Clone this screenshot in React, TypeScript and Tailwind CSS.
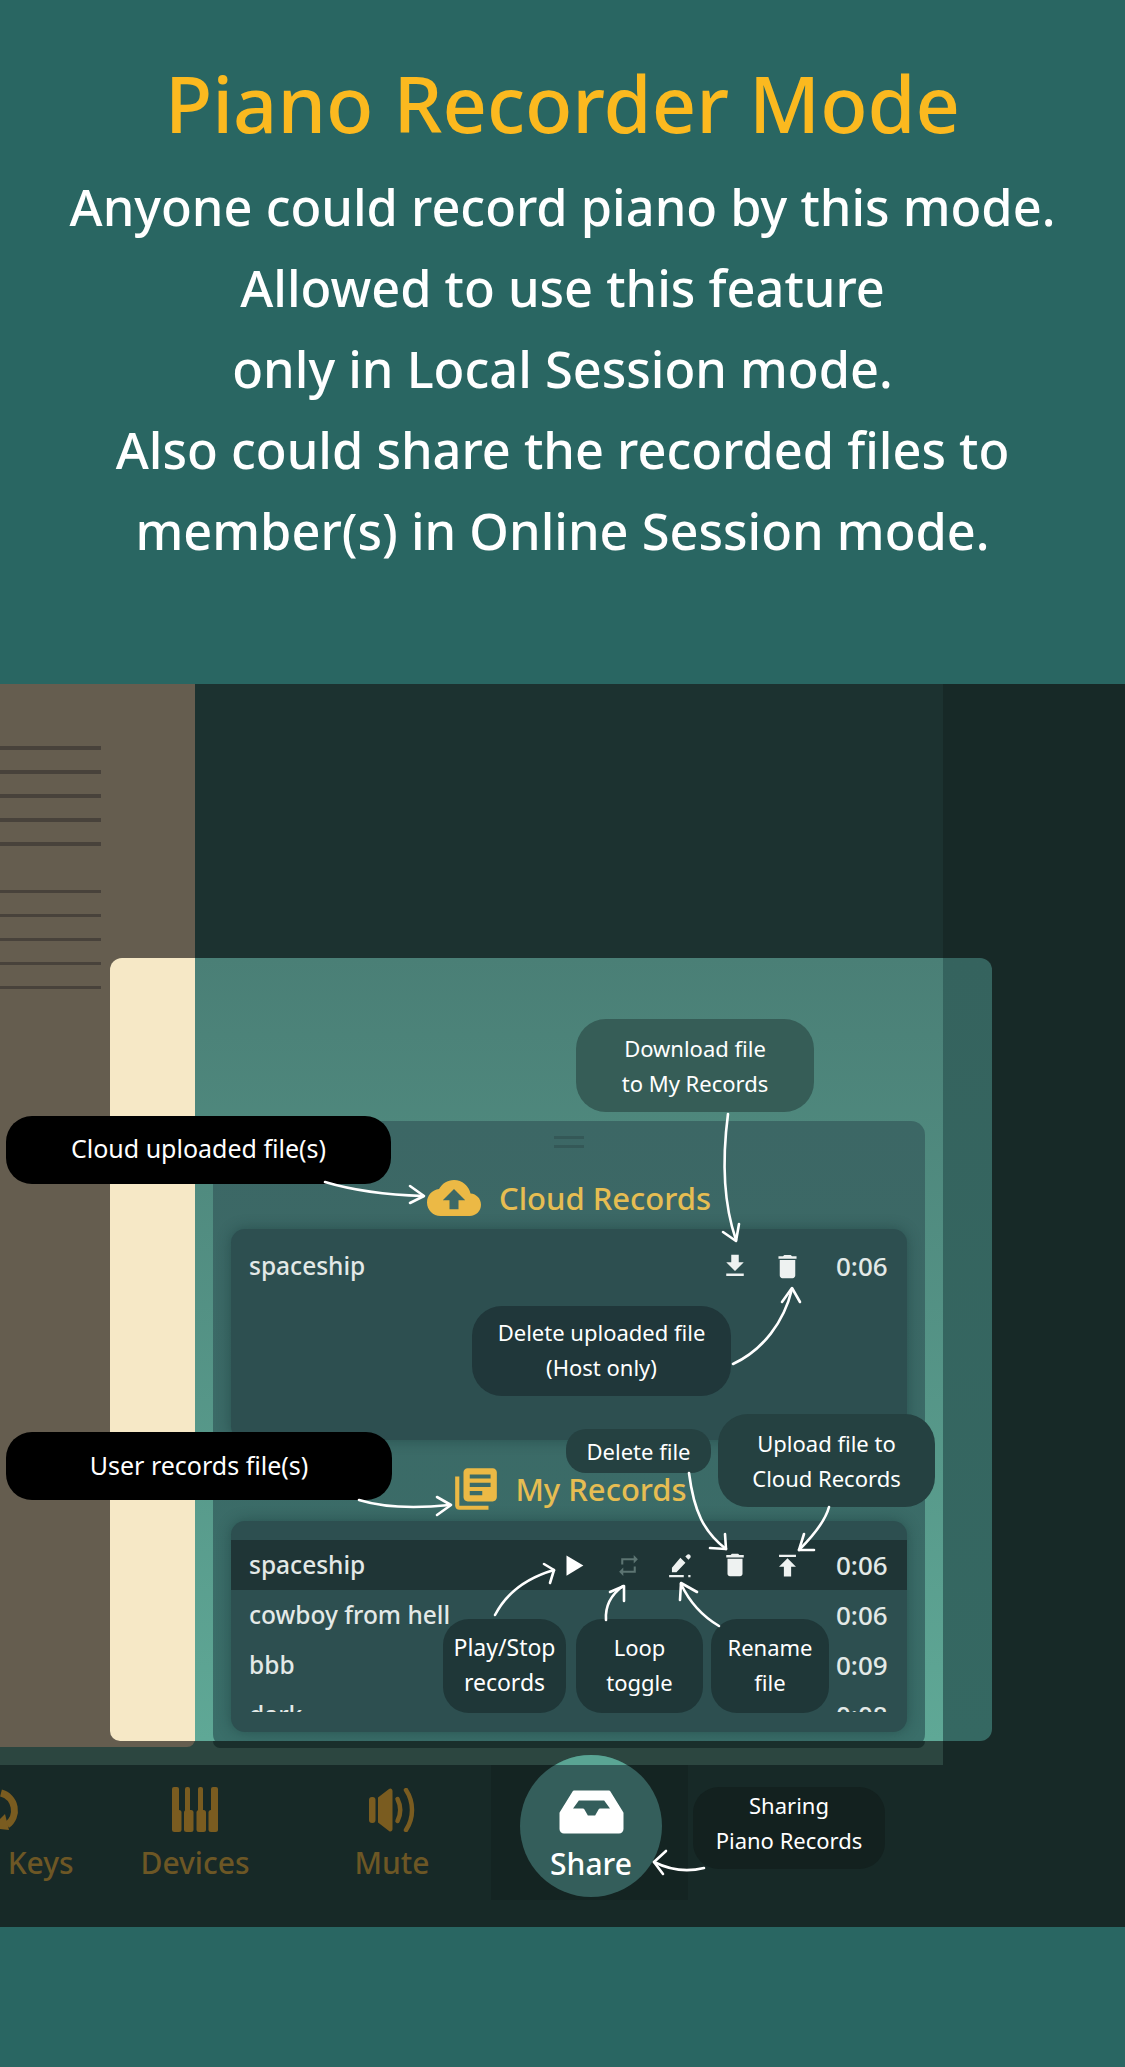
import React from "react";

const font = "font-['Noto_Sans',sans-serif]";

function Mi({ d, className }: { d: string; className: string }) {
  return (
    <svg viewBox="0 0 24 24" className={className} fill="currentColor">
      <path d={d} />
    </svg>
  );
}

const ICONS = {
  download: "M19 9h-4V3H9v6H5l7 7 7-7zM5 18v2h14v-2H5z",
  trash: "M6 19c0 1.1.9 2 2 2h8c1.1 0 2-.9 2-2V7H6v12zM19 4h-3.5l-1-1h-5l-1 1H5v2h14V4z",
  play: "M4 3v18l15-9z",
  loop: "M7 7h10v3l4-4-4-4v3H5v6h2V7zm10 10H7v-3l-4 4 4 4v-3h12v-6h-2v4z",
  pencil: "M15.5 9.5L11 5 3.5 14v4h4zM19.6 5.4c.8-.8.8-2 0-2.8-.8-.8-2-.8-2.8 0l-1.4 1.4 2.8 2.8zM1 20.5h13v2H1zM18 20.5h2v2h-2z",
  upload: "M5 3v2h14V3H5zm0 10h4v8h6v-8h4l-7-7-7 7z",
  cloud: "M19.35 10.04C18.67 6.59 15.64 4 12 4 9.11 4 6.6 5.64 5.35 8.04 2.34 8.36 0 10.91 0 14c0 3.31 2.69 6 6 6h13c2.76 0 5-2.24 5-5 0-2.64-2.05-4.78-4.65-4.96zM14 13v4h-4v-4H7l5-5 5 5h-3z",
  books: "M4 6H2v14c0 1.1.9 2 2 2h14v-2H4V6zm16-4H8c-1.1 0-2 .9-2 2v12c0 1.1.9 2 2 2h12c1.1 0 2-.9 2-2V4c0-1.1-.9-2-2-2zm-1 9H9V9h10v2zm-4 4H9v-2h6v2zm4-8H9V5h10v2z",
};

function Callout({ className, lines }: { className: string; lines: string[] }) {
  return (
    <div className={`absolute flex flex-col items-center justify-center text-center text-white leading-[35px] whitespace-nowrap ${className}`}>
      {lines.map((l) => (
        <div key={l}>{l}</div>
      ))}
    </div>
  );
}

const ARROWS = [
  ["M325 1182C355 1191 390 1195 423 1196", "M410 1186L424 1196L410 1203"],
  ["M359 1500C388 1509 420 1508 450 1505", "M437 1497L451 1505L437 1515"],
  ["M728 1114C722 1160 724 1205 736 1240", "M723 1232L736 1241L739 1224"],
  ["M733 1364C763 1350 784 1322 792 1289", "M782 1302L792 1288L800 1302"],
  ["M689 1473C694 1512 704 1532 726 1549", "M710 1548L726 1549L725 1534"],
  ["M829 1507C825 1522 812 1537 799 1550", "M804 1534L799 1550L814 1550"],
  ["M495 1615C508 1590 530 1577 554 1570", "M544 1564L554 1570L550 1583"],
  ["M606 1620C605 1606 612 1594 623 1586", "M610 1592L624 1586L624 1601"],
  ["M719 1626C702 1616 690 1603 681 1584", "M680 1600L681 1583L697 1592"],
  ["M704 1868C688 1872 670 1870 654 1862", "M666 1851L654 1862L663 1874"],
];

function Row({ name, time, selected, icons }: { name: string; time: string; selected?: boolean; icons?: React.ReactNode }) {
  return (
    <div className={`flex h-[50px] shrink-0 items-center pl-[18px] pr-[19px] text-[24.5px] font-medium text-[#e3e9e7] ${selected ? "bg-[#1f3536]" : ""}`}>
      <span>{name}</span>
      <div className="ml-auto flex items-center">{icons}</div>
      <span className="ml-[22px] w-[52px] text-[26px]">{time}</span>
    </div>
  );
}

function IconBox({ d, className }: { d: string; className: string }) {
  return (
    <div className="flex w-[53px] justify-center">
      <Mi d={d} className={className} />
    </div>
  );
}

export default function App() {
  return (
    <div className={`flex h-[2067px] w-[1125px] flex-col overflow-hidden bg-[#296662] ${font}`}>
      <header className="flex h-[684px] shrink-0 flex-col items-center pt-[59px] text-center">
        <h1 className="h-[88px] whitespace-nowrap text-[77.5px] font-medium leading-[88px] text-[#fbb91f]">Piano Recorder Mode</h1>
        <div className="mt-[19px] whitespace-nowrap text-[50.5px] font-medium leading-[81px] text-white">
          <p>Anyone could record piano by this mode.</p>
          <p>Allowed to use this feature</p>
          <p>only in Local Session mode.</p>
          <p>Also could share the recorded files to</p>
          <p>member(s) in Online Session mode.</p>
        </div>
      </header>

      <section className="relative h-[1243px] shrink-0 overflow-hidden bg-[#172927]">
        {/* backdrop */}
        <div className="flex h-[1081px] w-[943px] items-start bg-[#2c4640]">
          <div className="flex h-[1063px] w-[195px] flex-col rounded-br-[8px] bg-[#655d4f]">
            <div className="mt-[62px] flex w-[101px] flex-col gap-[20.5px]">
              {[0, 1, 2, 3, 4].map((i) => (
                <div key={i} className="h-[3.5px] bg-[#48423b]" />
              ))}
            </div>
            <div className="mt-[44px] flex w-[101px] flex-col gap-[20.5px]">
              {[0, 1, 2, 3, 4].map((i) => (
                <div key={i} className="h-[3.5px] bg-[#48423b]" />
              ))}
            </div>
          </div>
          <div className="h-[1057px] w-[748px] bg-[#1c3230]" />
        </div>

        {/* bottom bar */}
        <nav className="relative h-[162px] bg-[#172927] text-[30px] font-medium text-[#6d5725]">
          <div className="absolute left-[-78px] top-[23px] flex w-[150px] flex-col items-center">
            <svg viewBox="0 0 44 44" className="h-[44px] w-[44px]" fill="none" stroke="#7a5c20" strokeWidth="7">
              <path d="M26 5A18 18 0 0 1 32 37" />
              <path d="M16 40L34 42L30 26z" fill="#7a5c20" stroke="none" />
            </svg>
            <span className="mt-[13px] whitespace-nowrap leading-[36px]">Reset Keys</span>
          </div>
          <div className="absolute left-[135px] top-[22px] flex w-[120px] flex-col items-center">
            <svg viewBox="0 0 46 45" className="h-[45px] w-[46px]" fill="#7a5c20">
              <rect x="0" y="0" width="7" height="28" rx="2" />
              <rect x="13" y="0" width="5" height="28" rx="2" />
              <rect x="26" y="0" width="5" height="28" rx="2" />
              <rect x="39" y="0" width="7" height="28" rx="2" />
              <rect x="0" y="23" width="9.5" height="22" rx="2.5" />
              <rect x="12" y="23" width="9.5" height="22" rx="2.5" />
              <rect x="24.5" y="23" width="9.5" height="22" rx="2.5" />
              <rect x="36.5" y="23" width="9.5" height="22" rx="2.5" />
            </svg>
            <span className="mt-[13px] leading-[36px]">Devices</span>
          </div>
          <div className="absolute left-[332px] top-[23px] flex w-[120px] flex-col items-center">
            <svg viewBox="0 0 46 44" className="h-[44px] w-[46px]" fill="#7a5c20">
              <rect x="0" y="9" width="6.5" height="26" rx="3" />
              <path d="M9 9.5L20 1c1.5-1.2 3.5-.2 3.5 2V41c0 2.2-2 3.2-3.5 2L9 34.5z" />
              <path d="M28.5 11c3.5 7 3.5 15 0 22" fill="none" stroke="#7a5c20" strokeWidth="4.5" strokeLinecap="round" />
              <path d="M37 2c8 12 8 28 0 40" fill="none" stroke="#7a5c20" strokeWidth="4.5" strokeLinecap="round" />
            </svg>
            <span className="mt-[13px] leading-[36px]">Mute</span>
          </div>
          <div className="absolute left-[491px] top-0 h-[135px] w-[197px] bg-[#142422]" />
        </nav>

        {/* modal */}
        <div className="absolute left-[110px] top-[274px] flex h-[783px] w-[882px] overflow-hidden rounded-[12px] rounded-bl-[10px]">
          <div className="w-[85px] bg-[#f6e8c6]" />
          <div className="w-[748px] bg-gradient-to-b from-[#4a7f76] to-[#5fa896]" />
          <div className="w-[49px] bg-gradient-to-b from-[#35635e] to-[#356862]" />
        </div>

        {/* records panel */}
        <div className="absolute left-[213px] top-[437px] flex h-[627px] w-[712px] flex-col rounded-[14px] bg-gradient-to-b from-[#3c6765] to-[#3a6e69] px-[18px] pt-[15px]">
          <div className="mx-auto flex h-[12px] w-[30px] flex-col justify-between">
            <div className="h-[3px] bg-[#345857]" />
            <div className="h-[3px] bg-[#345857]" />
          </div>
          <div className="mt-[26px] flex h-[48px] items-center justify-center text-[31px] font-medium text-[#e6bd52]">
            <Mi d={ICONS.cloud} className="mr-[18px] h-[54px] w-[54px] text-[#ecb945]" />
            <span>Cloud Records</span>
          </div>
          <div className="mt-[7px] h-[211px] rounded-[14px] bg-[#2d4f50] pt-[12px] shadow-[0_0_14px_rgba(20,50,50,0.45)]">
            <Row
              name="spaceship"
              time="0:06"
              icons={
                <>
                  <IconBox d={ICONS.download} className="h-[30px] w-[30px] text-[#eef2f1]" />
                  <IconBox d={ICONS.trash} className="h-[31px] w-[31px] text-[#eef2f1]" />
                </>
              }
            />
          </div>
          <div className="mt-[25px] flex h-[48px] items-center justify-center text-[31px] font-medium text-[#e6bd52]">
            <Mi d={ICONS.books} className="mr-[14px] h-[50px] w-[50px] text-[#ecb945]" />
            <span>My Records</span>
          </div>
          <div className="mt-[8px] h-[211px] rounded-[14px] bg-[#2d4f50] pt-[19px] shadow-[0_0_14px_rgba(20,50,50,0.45)]">
            <div className="flex h-[172px] flex-col overflow-hidden">
              <Row
                name="spaceship"
                time="0:06"
                selected
                icons={
                  <>
                    <IconBox d={ICONS.play} className="h-[27px] w-[27px] text-white" />
                    <IconBox d={ICONS.loop} className="h-[25px] w-[25px] text-[#5c7472]" />
                    <IconBox d={ICONS.pencil} className="h-[27px] w-[27px] text-[#eef2f1]" />
                    <IconBox d={ICONS.trash} className="h-[30px] w-[30px] text-[#eef2f1]" />
                    <IconBox d={ICONS.upload} className="h-[29px] w-[29px] text-[#eef2f1]" />
                  </>
                }
              />
              <Row name="cowboy from hell" time="0:06" />
              <Row name="bbb" time="0:09" />
              <Row name="dark" time="0:08" />
            </div>
          </div>
          <div className="absolute inset-x-0 bottom-0 h-[7px] rounded-b-[10px] bg-[#1a2f2c]" />
        </div>

        {/* Share button */}
        <div className="absolute left-[520px] top-[1071px] flex h-[142px] w-[142px] flex-col items-center overflow-hidden rounded-full bg-[#345e5b] text-white">
          <div className="absolute inset-x-0 top-0 h-[10px] bg-[#5aa594]" />
          <svg viewBox="0 0 65 44" className="relative mt-[35px] h-[44px] w-[65px] shrink-0" fill="#fff" stroke="#fff" strokeWidth="3" strokeLinejoin="round">
            <path
              fillRule="evenodd"
              d="M15 2H50L63 23V39a3 3 0 0 1-3 3H5a3 3 0 0 1-3-3V23zM19 9L11 20H24L28 27H37L41 20H54L46 9z"
            />
          </svg>
          <span className="relative mt-[8px] text-[30px] font-medium leading-[44px]">Share</span>
        </div>

        {/* callouts */}
        <Callout className="left-[576px] top-[335px] h-[93px] w-[238px] rounded-[30px] bg-[#365d57] text-[22px]" lines={["Download file", "to My Records"]} />
        <Callout className="left-[6px] top-[432px] h-[68px] w-[385px] rounded-[26px] bg-black pb-[3px] text-[25px]" lines={["Cloud uploaded file(s)"]} />
        <Callout className="left-[6px] top-[748px] h-[68px] w-[386px] rounded-[26px] bg-black pb-[2px] text-[25px]" lines={["User records file(s)"]} />
        <Callout className="left-[472px] top-[622px] h-[90px] w-[259px] rounded-[30px] bg-[#20373a] pb-[2px] text-[22px]" lines={["Delete uploaded file", "(Host only)"]} />
        <Callout className="left-[566px] top-[745px] h-[44px] w-[145px] rounded-[20px] bg-[#254141] text-[22px]" lines={["Delete file"]} />
        <Callout className="left-[718px] top-[730px] h-[93px] w-[217px] rounded-[30px] bg-[#254141] text-[22px]" lines={["Upload file to", "Cloud Records"]} />
        <Callout className="left-[443px] top-[935px] h-[94px] w-[123px] rounded-[26px] bg-[#1f3738] pb-[2px] text-[23px]" lines={["Play/Stop", "records"]} />
        <Callout className="left-[576px] top-[935px] h-[94px] w-[127px] rounded-[26px] bg-[#1f3738] pb-[2px] text-[22px]" lines={["Loop", "toggle"]} />
        <Callout className="left-[711px] top-[935px] h-[94px] w-[118px] rounded-[26px] bg-[#1f3738] pb-[2px] text-[22px]" lines={["Rename", "file"]} />
        <Callout className="left-[693px] top-[1103px] h-[82px] w-[192px] rounded-[26px] bg-[#13211f] pb-[10px] text-[22px]" lines={["Sharing", "Piano Records"]} />

        {/* annotation arrows */}
        <svg viewBox="0 684 1125 1243" className="pointer-events-none absolute left-0 top-0 h-[1243px] w-[1125px]" fill="none" stroke="#fff" strokeWidth="2.6" strokeLinecap="round" strokeLinejoin="round">
          {ARROWS.map(([a, b]) => (
            <g key={a}>
              <path d={a} />
              <path d={b} />
            </g>
          ))}
        </svg>
      </section>

      <footer className="flex-1 bg-[#296662]" />
    </div>
  );
}
